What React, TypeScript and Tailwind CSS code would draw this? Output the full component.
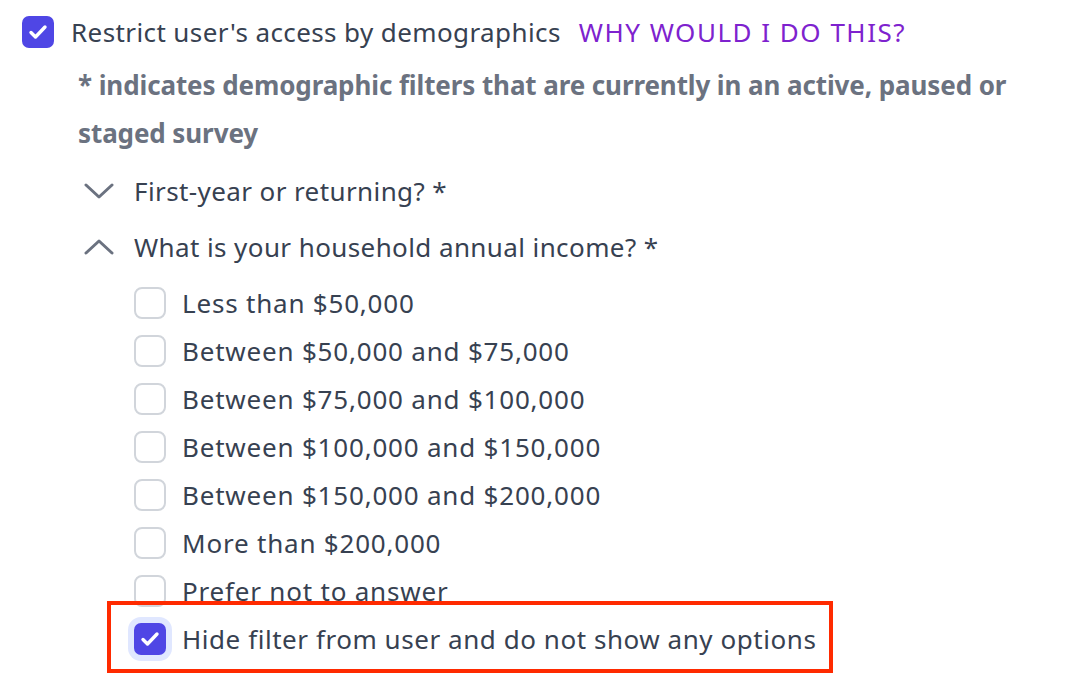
import React from "react";

const options = [
  "Less than $50,000",
  "Between $50,000 and $75,000",
  "Between $75,000 and $100,000",
  "Between $100,000 and $150,000",
  "Between $150,000 and $200,000",
  "More than $200,000",
  "Prefer not to answer",
];

function Check() {
  return (
    <svg width="22" height="22" viewBox="0 0 22 22" fill="none">
      <path
        d="M4 11.5l4.5 4.5 9.5-10"
        stroke="white"
        strokeWidth="3.4"
        strokeLinecap="round"
        strokeLinejoin="round"
      />
    </svg>
  );
}

function Box(props: { checked?: boolean; ring?: boolean }) {
  if (props.checked) {
    return (
      <div
        className={
          props.ring
            ? "w-8 h-8 shrink-0 rounded-[7px] bg-[#4f46e5] flex items-center justify-center shadow-[0_0_0_6px_#e0e7ff]"
            : "w-8 h-8 shrink-0 rounded-[7px] bg-[#4f46e5] flex items-center justify-center"
        }
      >
        <Check />
      </div>
    );
  }
  return (
    <div className="w-8 h-8 shrink-0 rounded-[8px] border-2 border-[#d1d5db] bg-white" />
  );
}

function Chevron(props: { up?: boolean }) {
  return (
    <svg width="30" height="18" viewBox="0 0 30 18" fill="none">
      <path
        d={props.up ? "M2 15L15 3l13 12" : "M2 3l13 12 13-12"}
        stroke="#6b7280"
        strokeWidth="3"
        strokeLinecap="round"
        strokeLinejoin="round"
      />
    </svg>
  );
}

export default function App() {
  return (
    <div
      className="w-[1068px] h-[678px] bg-white overflow-hidden text-[#374151] text-[26px] tracking-[0.4px]"
      style={{ fontFamily: "'Noto Sans', sans-serif" }}
    >
      <div className="pl-[22px] pt-[8px]">
        <div className="flex items-center h-12">
          <Box checked />
          <span className="ml-[17px]">Restrict user's access by demographics</span>
          <span className="ml-[18px] text-[#7e22ce] tracking-[1.5px]">WHY WOULD I DO THIS?</span>
        </div>

        <div className="pl-[56px] mt-[5px]">
          <p className="font-bold text-[#6b7280] leading-[48px] whitespace-nowrap tracking-[-0.1px]">
            * indicates demographic filters that are currently in an active, paused or
            <br />
            staged survey
          </p>
        </div>

        <div className="pl-[62px] mt-[6px]">
          <div className="flex items-center h-14">
            <Chevron />
            <span className="ml-[20px]">First-year or returning? *</span>
          </div>
          <div className="flex items-center h-14">
            <Chevron up />
            <span className="ml-[20px]">What is your household annual income? *</span>
          </div>
        </div>

        <div className="pl-[112px] mt-[4px]">
          {options.map((o) => (
            <div key={o} className="flex items-center h-12">
              <Box />
              <span className="ml-4 tracking-[0.8px]">{o}</span>
            </div>
          ))}
          <div className="-ml-[27px] -mt-[14px] w-[726px] border-4 border-[#ff2a00] pl-[23px] pt-[10px] pb-[6px] relative">
            <div className="flex items-center h-12">
              <Box checked ring />
              <span className="ml-4 tracking-[0.55px]">Hide filter from user and do not show any options</span>
            </div>
          </div>
        </div>
      </div>
    </div>
  );
}
